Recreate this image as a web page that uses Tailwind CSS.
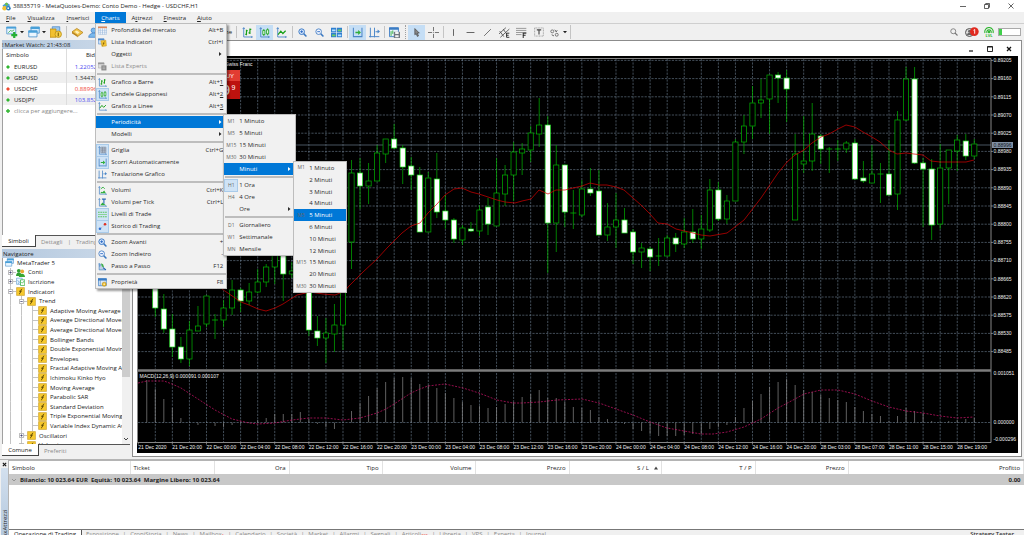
<!DOCTYPE html>
<html lang="it">
<head>
<meta charset="utf-8">
<title>38835719 - MetaQuotes-Demo: Conto Demo - Hedge - USDCHF,H1</title>
<script src="https://cdn.jsdelivr.net/npm/@tailwindcss/browser@4"></script>
</head>
<body class="h-screen overflow-hidden flex flex-col bg-[#f0f0f0] font-['Open_Sans','Noto_Sans',sans-serif] text-[6px] leading-none text-[#222] whitespace-nowrap">

<svg class="hidden" aria-hidden="true">
  <symbol id="axes" viewBox="0 0 16 16"><path d="M2.5 1v13.5H15M1 3l1.500-2L4 3M13.500 13l1.500 1.500-1.500 1.500" fill="none" stroke="#4a86c8" stroke-width="1.300"/></symbol>
  <symbol id="bars" viewBox="0 0 16 16"><use href="#axes"/><path d="M6.500 4v8M4.500 10.500h2M6.500 5.500h2M11.500 2v8M9.500 8.500h2M11.500 3.500h2" fill="none" stroke="#18a018" stroke-width="1.700"/></symbol>
  <symbol id="candles" viewBox="0 0 16 16"><use href="#axes"/><path d="M5.500 5h3v6h-3zM7 3v2M7 11v2M11 4h3v6h-3zM12.500 2v2M12.500 10v2" fill="#e8ffe8" stroke="#18a018" stroke-width="1.200"/></symbol>
  <symbol id="line" viewBox="0 0 16 16"><use href="#axes"/><path d="M3 11l4-5 3 3.500 4-4" fill="none" stroke="#18a018" stroke-width="1.700"/></symbol>
  <symbol id="zin" viewBox="0 0 16 16"><path d="M10 10l5 5" stroke="#3a78c0" stroke-width="2.600"/><circle cx="6.500" cy="6.500" r="5" fill="#dcecff" stroke="#2f6fc0" stroke-width="1.600"/><path d="M4 6.500h5M6.500 4v5" stroke="#2060c0" stroke-width="1.500"/></symbol>
  <symbol id="zout" viewBox="0 0 16 16"><path d="M10 10l5 5" stroke="#3a78c0" stroke-width="2.600"/><circle cx="6.500" cy="6.500" r="5" fill="#f0f6ff" stroke="#4a80c4" stroke-width="1.600"/><path d="M4 6.500h5" stroke="#2060c0" stroke-width="1.500"/></symbol>
  <symbol id="tile" viewBox="0 0 16 16"><path d="M0 1h7.500v6.500H0zM8.500 1H16v6.500H8.500zM0 8.500h7.500V15H0zM8.500 8.500H16V15H8.500z" fill="#2f7fd0"/><path d="M1.500 3.500h5v2.500h-5zM10 11h5v2.500h-5z" fill="#b8e0ff"/><path d="M10 3.500h5v2.500h-5zM1.500 11h5v2.500h-5z" fill="#6fd060"/></symbol>
  <symbol id="scroll" viewBox="0 0 16 16"><path d="M2 1v14M14.500 1v14M2 14h12" stroke="#4a86c8" stroke-width="1.500" fill="none"/><path d="M5 7h4V4.500L13 8l-4 3.500V9H5z" fill="#2fae3a"/></symbol>
  <symbol id="shift" viewBox="0 0 16 16"><path d="M2 1v14M8 1v14M0 14h15" stroke="#4a86c8" stroke-width="1.400" fill="none"/><path d="M9.500 6h3V3.500L16 6.500l-3.500 3V7.500h-3z" fill="#4a86c8"/></symbol>
  <symbol id="tmpl" viewBox="0 0 16 16"><path d="M.700 1h13v13H.700z" fill="#e8f2fc" stroke="#3a7cc4" stroke-width="1.300"/><path d="M0 1h14v3H0z" fill="#3a7cc4"/><path d="M3 6v7M5.500 5v5" stroke="#2fae3a" stroke-width="1.300"/><path d="M7 7h9v9H7z" fill="#707880"/><path d="M9 7h5v3H9zM9 12h5v3H9z" fill="#f2f2f2"/></symbol>
  <symbol id="grid" viewBox="0 0 16 16"><use href="#axes"/><path d="M5 2h9v10H5zM5 5.300h9M5 8.600h9M8 2v10M11 2v10" stroke="#707c90" stroke-width="1" fill="#c8d0dc"/></symbol>
  <symbol id="vol" viewBox="0 0 16 16"><use href="#axes"/><path d="M4 13l2-3 2 1 3-3 3 5z" fill="#2fae3a"/><path d="M5 5l4-3 3 3" stroke="#2fae3a" stroke-width="1.600" fill="none"/></symbol>
  <symbol id="volt" viewBox="0 0 16 16"><use href="#axes"/><path d="M4 13l4-5 6 5z" fill="#2fae3a"/><path d="M7 2h7M10.500 2v8" stroke="#2a6ab8" stroke-width="2"/></symbol>
  <symbol id="levels" viewBox="0 0 16 16"><path d="M0 4h16M0 12h16" stroke="#3fc03f" stroke-width="1.500" stroke-dasharray="3 1.200"/><path d="M0 8h16" stroke="#68cc68" stroke-width="1.200"/></symbol>
  <symbol id="hist" viewBox="0 0 16 16"><path d="M3 13L13 4" stroke="#88a" stroke-dasharray="2 1.500"/><circle cx="3.500" cy="12" r="2.300" fill="#2f6fd0"/><circle cx="12.500" cy="4" r="2.300" fill="#e03020"/></symbol>
  <symbol id="step" viewBox="0 0 16 16"><path d="M2 2v12h12M2 3l4 2-3 3z" stroke="#4a86c8" fill="#4a86c8" fill-opacity=".3" stroke-width="1.200"/><path d="M5 2l4 2 2 6-4-2z" fill="#3fae4a"/><path d="M9 10l5 4" stroke="#2060b0" stroke-width="2"/></symbol>
  <symbol id="props" viewBox="0 0 16 16"><path d="M.700 1.700h14v12h-14z" fill="#dceafa" stroke="#3a7cc4" stroke-width="1.300"/><path d="M0 1h15v3H0zM4 4v9" stroke="#3a7cc4" fill="#3a7cc4"/><circle cx="11" cy="11" r="3.600" fill="#f0c030" stroke="#b88a10"/><circle cx="11" cy="11" r="1.200" fill="#fff"/></symbol>
  <symbol id="depth" viewBox="0 0 16 16"><path d="M.600 1.600h15v13h-15z" fill="#fff" stroke="#8fb0d8"/><path d="M0 1h16v3H0z" fill="#e08858"/><path d="M0 7.500h16M0 11h16M4 4v11M8 4v11M12 4v11" stroke="#8fb0d8"/></symbol>
  <symbol id="ind" viewBox="0 0 16 16"><path d="M.700 1.700h10v9h-10z" fill="#cfe2f8" stroke="#4a86c8"/><path d="M0 1h11v3H0z" fill="#4a86c8"/><path d="M5 5l9-1 1 10-8 1z" fill="#f4c534" stroke="#c09018" stroke-width=".800"/><path d="M11.500 6.500c-2 0-1.500 7-3.500 7M8.500 9.500h3" stroke="#604400" fill="none"/></symbol>
  <symbol id="exp" viewBox="0 0 16 16"><path d="M.700 1.700h10v9h-10z" fill="#ddd" stroke="#aaa"/><path d="M0 1h11v3H0z" fill="#999"/><path d="M6 6h9v9H6z" fill="#888"/><path d="M8 9h5M8 12h5" stroke="#ddd"/></symbol>
  <symbol id="fx" viewBox="0 0 16 16"><path d="M1 1h14v14H1z" fill="#f6c92e" stroke="#c4951a"/><path d="M11 3.500c-3.500-.500-2 9-5.500 9M5.500 7.500h4.500" stroke="#4a3800" stroke-width="1.500" fill="none"/></symbol>
  <symbol id="newchart" viewBox="0 0 16 16"><path d="M1 1.500h12v9H1z" fill="#e6f3ff" stroke="#4a90c8"/><path d="M.500 1h13v2.500H.500z" fill="#48a0d8"/><path d="M3 9l3-3 2 1 3-2" stroke="#2fae3a" fill="none"/><path d="M9.500 8h3v2.500H15v3h-2.500V16h-3v-2.500H7v-3h2.500z" fill="#25b035"/></symbol>
  <symbol id="wins" viewBox="0 0 16 16"><path d="M4 1.500h11v8H4z" fill="#d4eafc" stroke="#3a88c8"/><path d="M3.500 1h12v3h-12z" fill="#48a0d8"/><path d="M1 6.500h11v8H1z" fill="#eaf6ff" stroke="#3a88c8"/><path d="M.500 6h12v3H.500z" fill="#48a0d8"/></symbol>
  <symbol id="market" viewBox="0 0 16 16"><path d="M3 1h10v11H3z" fill="#9cc8ee" stroke="#4a86c8"/><path d="M0 4h8v11H0z" fill="#f2c030" stroke="#b88a10"/><circle cx="11" cy="11" r="4.300" fill="#f6cf48" stroke="#b88a10"/><path d="M11 8.500v5" stroke="#806000" stroke-width="1.500"/></symbol>
  <symbol id="diamond" viewBox="0 0 16 16"><path d="M0 7l7-5 9 6-8 6z" fill="#efc24a" stroke="#b07c10"/><path d="M0 7l8 4.500v2.500L0 9.500z" fill="#b88420"/><path d="M4 7l3-2 4 3-3 2z" fill="#fff0b8"/></symbol>
  <symbol id="user" viewBox="0 0 16 16"><circle cx="8" cy="5" r="3.500" fill="#7ab8ec" stroke="#3a7cc4"/><path d="M1 15c0-8 14-8 14 0z" fill="#7ab8ec" stroke="#3a7cc4"/></symbol>
  <symbol id="people" viewBox="0 0 16 16"><circle cx="5" cy="5" r="3.400" fill="#2f9e30"/><path d="M0 14c0-8 10-8 10 0z" fill="#2f9e30"/><circle cx="11" cy="6" r="3.400" fill="#e8a830"/><path d="M5 16c0-8 11-8 11 0z" fill="#38a830"/></symbol>
  <symbol id="signal" viewBox="0 0 16 16"><path d="M1 2h10v11H1z" fill="#e8f4ff" stroke="#4a90c8"/><path d="M3 6l3 3-2 3" fill="none" stroke="#4a90c8" stroke-width="1.300"/><path d="M8 5h7.500v10H8z" fill="#fff" stroke="#2fae3a" stroke-width="1.300"/><path d="M9.500 9l2 2 3-4" stroke="#2fae3a" stroke-width="1.300" fill="none"/></symbol>
  <symbol id="logo" viewBox="0 0 16 16"><path d="M8 1l6 4-2 8H4L1 6z" fill="#4aa0d8"/><circle cx="4.500" cy="11" r="4" fill="#f4c030"/><circle cx="11.500" cy="11" r="4" fill="#2f80c0"/><circle cx="8" cy="4" r="2.500" fill="#6fc04a"/><circle cx="11" cy="11" r="1.500" fill="#fff"/></symbol>
</svg>

<header class="flex h-[12px] shrink-0 items-center bg-white">
  <svg class="ml-[2px] size-[9px]"><use href="#logo"/></svg>
  <h1 class="ml-[2px] flex-1">38835719 - MetaQuotes-Demo: Conto Demo - Hedge - USDCHF,H1</h1>
  <div class="flex pr-px">
    <button aria-label="Riduci" class="flex h-[10px] w-[24px] items-center justify-center"><svg class="size-[6px]" viewBox="0 0 6 6"><path d="M0 3.500h6" stroke="#222" stroke-width=".700"/></svg></button>
    <button aria-label="Ripristina" class="flex h-[10px] w-[24px] items-center justify-center"><svg class="size-[6px]" viewBox="0 0 6 6"><path d="M.500 1.500h4v4h-4zM1.700 1.500v-1h3.800v3.800h-1" fill="none" stroke="#222" stroke-width=".700"/></svg></button>
    <button aria-label="Chiudi" class="flex h-[10px] w-[24px] items-center justify-center"><svg class="size-[6px]" viewBox="0 0 6 6"><path d="M.500.500l5 5M5.500.500l-5 5" stroke="#222" stroke-width=".700"/></svg></button>
  </div>
</header>

<nav class="relative z-10 flex h-[12px] shrink-0 border-b border-[#cfcfcf]">
  <button class="px-[6px]"><u>F</u>ile</button>
  <button class="px-[6px]"><u>V</u>isualizza</button>
  <button class="px-[6px]"><u>I</u>nserisci</button>
  <div class="relative flex">
    <button class="bg-[#0078d7] px-[6px] text-white"><u>C</u>harts</button>
    <div id="menu-charts" class="absolute left-0 top-[11px] w-[132px] border border-[#bdbdbd] bg-[#f1f1f1] text-[#2a2a2a] shadow-[2px_2px_2px_rgba(0,0,0,0.4)]"></div>
    <div id="menu-period" class="absolute left-[128px] top-[102px] w-[73px] border border-[#bdbdbd] bg-[#f1f1f1] text-[#2a2a2a] shadow-[1px_1px_2px_rgba(0,0,0,0.4)]"></div>
    <div id="menu-minutes" class="absolute left-[198px] top-[149px] grid h-[132px] w-[54px] auto-rows-fr border border-[#bdbdbd] bg-[#f1f1f1] text-[#2a2a2a]"></div>
  </div>
  <button class="px-[6px]">A<u>t</u>trezzi</button>
  <button class="px-[5px]"><u>F</u>inestra</button>
  <button class="px-[6px]"><u>A</u>iuto</button>
</nav>

<div role="toolbar" class="flex h-[16px] shrink-0 items-center pl-[4px] pr-[3px]">
  <button aria-label="Nuovo grafico" class="flex w-[22px] items-center justify-center gap-[2px]"><svg class="size-[12px]"><use href="#newchart"/></svg><svg class="size-[4px]" viewBox="0 0 4 4"><path d="M0 1h4L2 3.200z" fill="#222"/></svg></button>
  <button aria-label="Profili" class="flex w-[22px] items-center justify-center gap-[2px]"><svg class="size-[12px]"><use href="#wins"/></svg><svg class="size-[4px]" viewBox="0 0 4 4"><path d="M0 1h4L2 3.200z" fill="#222"/></svg></button>
  <button aria-label="Market Watch" class="flex w-[16px] justify-center"><svg class="size-[12px]"><use href="#market"/></svg></button>
  <i class="mx-[2px] h-[12px] w-px bg-[#c4c4c4]"></i>
  <button aria-label="Navigatore" class="flex w-[16px] justify-center"><svg class="size-[11px]"><use href="#diamond"/></svg></button>
  <button aria-label="Conto" class="flex w-[16px] justify-center"><svg class="size-[11px]"><use href="#user"/></svg></button>
  <button class="w-[133px] pr-[2px] text-right">Nuovo Ordine</button>
  <i class="mx-[2px] h-[12px] w-px bg-[#c4c4c4]"></i>
  <button aria-label="Barre" class="flex h-[15px] w-[17px] items-center justify-center"><svg class="size-[11px]"><use href="#bars"/></svg></button>
  <button aria-label="Candele" class="flex h-[15px] w-[17px] items-center justify-center bg-[#c5def5]"><svg class="size-[11px]"><use href="#candles"/></svg></button>
  <button aria-label="Linee" class="flex h-[15px] w-[17px] items-center justify-center"><svg class="size-[11px]"><use href="#line"/></svg></button>
  <i class="ml-[2px] mr-px h-[12px] w-px bg-[#c4c4c4]"></i>
  <button aria-label="Zoom avanti" class="flex w-[17px] justify-center"><svg class="size-[9px]"><use href="#zin"/></svg></button>
  <button aria-label="Zoom indietro" class="flex w-[17px] justify-center"><svg class="size-[9px]"><use href="#zout"/></svg></button>
  <button aria-label="Affianca" class="flex w-[17px] justify-center"><svg class="size-[11px]"><use href="#tile"/></svg></button>
  <i class="ml-[2px] mr-px h-[12px] w-px bg-[#c4c4c4]"></i>
  <button aria-label="Scorri" class="flex h-[15px] w-[17px] items-center justify-center bg-[#c5def5]"><svg class="size-[11px]"><use href="#scroll"/></svg></button>
  <button aria-label="Traslazione" class="flex w-[17px] justify-center"><svg class="size-[11px]"><use href="#shift"/></svg></button>
  <i class="mx-px h-[12px] w-px bg-[#c4c4c4]"></i>
  <button aria-label="Modelli" class="flex w-[17px] justify-center"><svg class="size-[11px]"><use href="#tmpl"/></svg></button>
  <i class="mx-[2px] h-[14px] w-px border-l border-dotted border-[#a0a0a0]"></i>
  <button aria-label="Cursore" class="flex h-[15px] w-[17px] items-center justify-center bg-[#c5def5]"><svg class="size-[9px]" viewBox="0 0 16 16"><path d="M5 1l8 8H9.500l2 5-2 1-2-5L5 12z" fill="#888" stroke="#444" stroke-width="1.200"/></svg></button>
  <button aria-label="Mirino" class="flex w-[17px] justify-center"><svg class="size-[11px]" viewBox="0 0 16 16"><path d="M8 0v6M8 10v6M0 8h6M10 8h6M7.500 8h1" stroke="#666" stroke-width="1.300"/></svg></button>
  <i class="mx-px h-[12px] w-px bg-[#c4c4c4]"></i>
  <button aria-label="Linea verticale" class="flex w-[17px] justify-center"><svg class="size-[9px]" viewBox="0 0 16 16"><path d="M8 2v12" stroke="#666" stroke-width="1.800"/></svg></button>
  <button aria-label="Linea orizzontale" class="flex w-[17px] justify-center"><svg class="size-[9px]" viewBox="0 0 16 16"><path d="M1 8h14" stroke="#666" stroke-width="1.800"/></svg></button>
  <button aria-label="Trendline" class="flex w-[17px] justify-center"><svg class="size-[9px]" viewBox="0 0 16 16"><path d="M2 14L14 2" stroke="#666" stroke-width="1.600"/></svg></button>
  <button aria-label="Canale" class="flex w-[17px] justify-center"><svg class="size-[11px]" viewBox="0 0 16 16"><path d="M0 10L10 1M2 15L15 3M1 6l6 8M6 3l5 7" stroke="#555" stroke-width="1.300"/><path d="M11 9h4M11 12h3M11 15h4M11 9v6" stroke="#222" stroke-width="1.300"/></svg></button>
  <button aria-label="Fibonacci" class="flex w-[17px] justify-center"><svg class="size-[11px]" viewBox="0 0 16 16"><path d="M0 2h15M0 5h15M0 8h15M0 11h8" stroke="#888" stroke-width="1.200"/><path d="M10 9h5M10 12h4M10.500 9v7" stroke="#222" stroke-width="1.400"/></svg></button>
  <button aria-label="Testo" class="flex w-[17px] justify-center"><svg class="size-[10px]" viewBox="0 0 16 16"><path d="M1 1.500h14v13H1z" fill="none" stroke="#777" stroke-dasharray="1.500 1"/><path d="M4.500 4.500h7M8 4.500V12" stroke="#444" stroke-width="1.800"/></svg></button>
  <button aria-label="Oggetti" class="flex w-[23px] items-center justify-center gap-[4px]"><svg class="size-[9px]" viewBox="0 0 16 16"><circle cx="4" cy="6" r="2.600" fill="none" stroke="#666" stroke-width="1.500"/><circle cx="12" cy="12" r="2.600" fill="none" stroke="#666" stroke-width="1.500"/><path d="M8 3l4 4M13 4l-3 3M3 12l4 2" stroke="#555" stroke-width="1.600"/></svg><svg class="size-[4px]" viewBox="0 0 4 4"><path d="M0 1h4L2 3.200z" fill="#222"/></svg></button>
  <i class="h-[14px] w-px bg-[#c4c4c4]"></i>
  <div class="ml-auto flex items-center">
    <button aria-label="Cerca" class="flex w-[17px] justify-center"><svg class="size-[8px]" viewBox="0 0 16 16"><circle cx="6.500" cy="6.500" r="5" fill="none" stroke="#777" stroke-width="1.700"/><path d="M10 10l5 5" stroke="#777" stroke-width="2.200"/></svg></button>
    <button aria-label="Notifiche" class="flex w-[19px] justify-center"><svg class="h-[10px] w-[14px]" viewBox="0 0 14 10"><circle cx="4.500" cy="5.500" r="4" fill="#ddd" stroke="#555"/><circle cx="4.500" cy="4.300" r="1.500" fill="#666"/><path d="M2 8c0-3 5-3 5 0z" fill="#666"/><circle cx="9.300" cy="4.600" r="4.400" fill="#e02a20"/><path d="M8.500 3.300l1.200-.800v4.200" fill="none" stroke="#fff" stroke-width=".900"/></svg></button>
    <button aria-label="Livello" class="flex w-[16px] flex-col items-center text-[4px] font-bold leading-[3px] text-[#2fb52f]"><svg class="h-[7px] w-[10px]" viewBox="0 0 10 7"><path d="M1 6a4.200 4.200 0 1 1 8 0M3 6a2.200 2.200 0 1 1 4 0" fill="none" stroke="#2fb52f" stroke-width="1.100"/><circle cx="5" cy="5" r="1.200" fill="#2fb52f"/></svg>LVL</button>
    <div class="ml-[1px] h-[8px] w-[23px] border border-[#aaa] bg-white"><div class="h-full w-[3px] bg-[#3fd04a]"></div></div>
  </div>
</div>

<main class="flex min-h-0 flex-1 pb-[2px]">
  <aside class="flex w-[132px] shrink-0 flex-col pb-px pl-[2px] pr-[2px]">
    <h2 class="flex h-[9px] shrink-0 items-center bg-linear-to-r from-[#b4c8de] to-[#cddbea]"><span class="mr-px">⁞</span>Market Watch: 21:43:08</h2>
    <div class="min-h-0 flex-1 border-l border-[#a0a0a0] bg-white">
      <table class="w-[94px] table-fixed border-collapse">
        <thead><tr class="h-[12px]"><th class="w-[63px] border-r border-[#ddd] pl-[3px] text-left font-normal">Simbolo</th><th class="pr-[2px] text-right font-normal">Bid</th></tr></thead>
        <tbody id="quotes"></tbody>
      </table>
    </div>
    <div class="flex h-[12px] shrink-0 items-center border-t border-[#555] text-[#8a8a8a]">
      <button class="-mt-px flex h-[12px] w-[34px] items-center justify-center border-b border-r border-[#444] bg-white text-[#222]">Simboli</button>
      <button class="px-[5px]">Dettagli</button><i class="not-italic">|</i><button class="px-[5px]">Trading</button>
    </div>
    <h2 class="mt-[2px] flex h-[9px] shrink-0 items-center bg-linear-to-r from-[#b4c8de] to-[#cddbea] pl-px">Navigatore</h2>
    <div class="flex min-h-0 flex-1 overflow-hidden border-l border-[#a0a0a0] bg-white">
      <div id="tree" class="grid h-[192px] min-w-0 flex-1 auto-rows-fr overflow-hidden"></div>
      <div class="flex w-[8px] shrink-0 flex-col items-center bg-[#f0f0f0]">
        <div class="h-[119px] w-full bg-[#cdcdcd]"></div>
        <svg class="mt-auto mb-[2px] size-[6px]" viewBox="0 0 6 6"><path d="M1 2l2 2 2-2" fill="none" stroke="#444"/></svg>
      </div>
    </div>
    <div class="flex h-[12px] shrink-0 items-center border-t border-[#555] text-[#8a8a8a]">
      <button class="-mt-px flex h-[12px] w-[37px] items-center justify-center border-b border-r border-[#444] bg-white text-[#222]">Comune</button>
      <button class="px-[5px]">Preferiti</button>
    </div>
  </aside>

  <section class="mr-[2px] flex min-w-0 flex-1 flex-col border border-[#8c8c8c] bg-white pb-[3px] pl-[4px] pr-[3px]">
    <div class="flex h-[15px] shrink-0 items-center justify-end">
      <button aria-label="Riduci grafico" class="flex w-[19px] justify-center"><svg class="size-[6px]" viewBox="0 0 6 6"><path d="M1 5h4" stroke="#111" stroke-width="1.200"/></svg></button>
      <button aria-label="Ingrandisci grafico" class="flex w-[19px] justify-center"><svg class="size-[6px]" viewBox="0 0 6 6"><path d="M.500.500h5v5h-5zM.500 1h5" fill="none" stroke="#111" stroke-width=".900"/></svg></button>
      <button aria-label="Chiudi grafico" class="flex w-[19px] justify-center"><svg class="size-[6px]" viewBox="0 0 6 6"><path d="M1 1l4 4M5 1L1 5" stroke="#111" stroke-width="1.300"/></svg></button>
    </div>
    <div class="min-h-0 flex-1 bg-black">
      <svg id="chart" class="block h-full w-full font-['Liberation_Sans',sans-serif] text-[5px]" viewBox="137 56 881 397" role="img" aria-label="USDCHF H1"></svg>
    </div>
  </section>
</main>

<section class="flex h-[76px] shrink-0 border-t border-[#b4b4b4]">
  <div class="flex w-[8px] shrink-0 flex-col items-center overflow-hidden pl-[1px]">
    <button aria-label="Chiudi" class="flex h-[8px] shrink-0 items-center"><svg class="size-[5px]" viewBox="0 0 6 6"><path d="M1 1l4 4M5 1L1 5" stroke="#111" stroke-width="1.300"/></svg></button>
    <div class="flex min-h-0 w-full flex-1 rotate-180 items-center justify-start bg-linear-to-b from-[#b4c8de] to-[#d3e0ee] [writing-mode:vertical-rl]"><span class="-mt-[18px]">ToolboxAttrezzi</span></div>
  </div>
  <div class="flex min-w-0 flex-1 flex-col border-l border-t border-[#b4b4b4] bg-white">
    <table class="w-full table-fixed border-collapse">
      <thead>
        <tr class="h-[13px] *:border-r *:border-[#e2e2e2] *:font-normal *:px-[3px] *:text-right">
          <th class="w-[121px] text-left!">Simbolo</th><th class="w-[84px] text-left!">Ticket</th><th class="w-[75px]">Ora</th><th class="w-[93px]">Tipo</th><th class="w-[93px]">Volume</th><th class="w-[94px]">Prezzo</th><th class="w-[92px]">S / L &nbsp;&nbsp;<svg class="inline size-[4px]" viewBox="0 0 4 4"><path d="M0 3.500h4L2 .500z" fill="#444"/></svg></th><th class="w-[94px]">T / P</th><th class="w-[93px]">Prezzo</th><th>Profitto</th>
        </tr>
      </thead>
      <tbody><tr class="h-[11px] bg-[#c8c8c8] font-bold"><td colspan="9" class="pl-[3px]"><svg class="mr-[4px] inline size-[4px]" viewBox="0 0 4 4"><path d="M0 1l2 2 2-2" fill="none" stroke="#888" stroke-width=".800"/></svg>Bilancio: 10 023.64 EUR&nbsp; Equità: 10 023.64&nbsp; Margine Libero: 10 023.64</td><td class="pr-[3px] text-right">0.00</td></tr></tbody>
    </table>
    <div class="mt-auto flex h-[6px] items-start overflow-hidden border-t border-[#777] bg-[#f0f0f0] text-[#8a8a8a]">
      <div id="tabs" class="-mt-px flex h-[10px] items-center"></div>
      <button class="-mt-px ml-auto h-[10px] pr-[10px] font-semibold text-[#333]">Strategy Tester</button>
    </div>
  </div>
</section>

<script>
const byId = id => document.getElementById(id);

/* ---- menus ---- */
const SEP = '<hr class="my-[2px] ml-[2px] h-0 border-0 outline-[0.5px] outline-[#bdbdbd]">';
const chartsMenu = [
  ['depth','Profondità del mercato','Alt+B'],['ind','Lista Indicatori','Ctrl+I'],['','Oggetti','>'],['exp','Lista Experts','','off'],0,
  ['bars','Grafico a Barre','Alt+<u>1</u>'],['candles','Candele Giapponesi','Alt+<u>2</u>','on'],['line','Grafico a Linee','Alt+<u>3</u>'],0,
  ['','Periodicità','>','hot'],['','Modelli','>'],0,
  ['grid','Griglia','Ctrl+G','on'],['scroll','Scorri Automaticamente','','on'],['shift','Traslazione Grafico',''],0,
  ['vol','Volumi','Ctrl+K'],['volt','Volumi per Tick','Ctrl+L'],['levels','Livelli di Trade','','on'],['hist','Storico di Trading','','on'],0,
  ['zin','Zoom Avanti','+'],['zout','Zoom Indietro','-'],['step','Passo a Passo','F12'],0,
  ['props','Proprietà','F8']];
const ARROW = '<svg class="mr-px size-[4px]" viewBox="0 0 4 4"><path d="M1 0v4l2.500-2z" fill="currentColor"/></svg>';
byId('menu-charts').innerHTML = chartsMenu.map(m => {
  if (!m) return SEP;
  const [icon, label, key, st] = m;
  const tone = st === 'hot' ? 'bg-[#0078d7] text-white' : st === 'off' ? 'text-[#8c8c8c]' : '';
  const mark = st === 'on' ? 'bg-[#cfe3f6] outline outline-[#a9cbea]' : '';
  return `<button class="flex h-[12px] w-full items-center pr-[3px] ${tone}">
    <span class="ml-px flex size-[11px] items-center justify-center ${mark}">${icon ? `<svg class="size-[9px]"><use href="#${icon}"/></svg>` : ''}</span>
    <span class="ml-[3px] flex-1 text-left">${label}</span>${key === '>' ? ARROW : `<span>${key}</span>`}</button>`;
}).join('');

const periodMenu = [['M1','1 Minuto'],['M5','5 Minuti'],['M15','15 Minuti'],['M30','30 Minuti'],['','Minuti','hot','>'],0,
  ['H1','1 Ora','on'],['H4','4 Ore'],['','Ore','','>'],0,['D1','Giornaliero'],['W1','Settimanale'],['MN','Mensile']];
const minuteMenu = [['M1','1 Minuto'],['','2 Minuti'],['','3 Minuti'],['','4 Minuti'],['M5','5 Minuti','hot'],['','6 Minuti'],
  ['','10 Minuti'],['','12 Minuti'],['M15','15 Minuti'],['','20 Minuti'],['M30','30 Minuti']];
const periodRow = m => {
  if (!m) return SEP;
  const [code, label, st, arrow] = m;
  return `<button class="flex min-h-[11px] w-full items-center pr-[3px] ${st === 'hot' ? 'bg-[#0078d7] text-white' : ''}">
    <span class="ml-px flex h-[11px] w-[12px] items-center justify-center text-[5px] text-[#666] ${st === 'on' ? 'bg-[#cfe3f6] outline outline-[#a9cbea]' : ''}">${code}</span>
    <span class="ml-[2px] flex-1 text-left">${label}</span>${arrow ? ARROW : ''}</button>`;
};
byId('menu-period').innerHTML = periodMenu.map(m => m ? `<div class="flex h-[12px]">${periodRow(m)}</div>` : SEP).join('');
byId('menu-minutes').innerHTML = minuteMenu.map(periodRow).join('');

/* ---- market watch ---- */
byId('quotes').innerHTML = [['EURUSD','1.22052','text-[#4a4af0]',1],['GBPUSD','1.34470','text-[#333]',1],['USDCHF','0.88996','text-[#f04030]',0],['USDJPY','103.852','text-[#4a4af0]',1]]
  .map(([s, b, tone, up], i) => `<tr class="h-[11px] ${i % 2 ? 'bg-[#efefef]' : ''}"><td class="border-r border-[#ddd] pl-[3px]"><svg class="mr-[4px] inline size-[4px]" viewBox="0 0 4 4"><path d="M2 0l2 2-2 2-2-2z" fill="${up ? '#2fb52f' : '#f04a30'}"/></svg>${s}</td><td class="${tone} text-right">${b}</td></tr>`).join('')
  + '<tr class="h-[11px]"><td colspan="2" class="pl-[3px] text-[#888]"><svg class="mr-[4px] inline size-[4px]" viewBox="0 0 4 4"><path d="M1.300 0h1.400v1.300H4v1.400H2.700V4H1.300V2.700H0V1.300h1.300z" fill="#2fb52f"/></svg>clicca per aggiungere...</td></tr>';

/* ---- navigator tree ---- */
const V = '<i class="w-[11px] shrink-0 self-stretch bg-[linear-gradient(#c4c4c4,#c4c4c4)] bg-[length:1px_100%] bg-center bg-no-repeat"></i>';
const T = '<i class="flex w-[11px] shrink-0 items-center self-stretch pl-[5px]"><b class="w-px self-stretch bg-[#c4c4c4]"></b><b class="h-px flex-1 bg-[#c4c4c4]"></b></i>';
const box = plus => `<i class="flex w-[11px] shrink-0 items-center justify-end self-stretch bg-[linear-gradient(#c4c4c4,#c4c4c4)] bg-[length:1px_100%] bg-center bg-no-repeat"><svg class="h-[5px] w-[8px]" viewBox="0 0 8 5"><path d="M5 2.500h3" stroke="#c4c4c4"/><path d="M.400.400h4.200v4.200H.400z" fill="#fff" stroke="#999" stroke-width=".700"/><path d="M1.300 2.500h2.400${plus ? 'M2.500 1.300v2.400' : ''}" stroke="#336" stroke-width=".700"/></svg></i>`;
const node = (pre, icon, label) => `<div class="flex items-center">${pre}<svg class="size-[9px] shrink-0"><use href="#${icon}"/></svg><span class="ml-[3px]">${label}</span></div>`;
const P = '<i class="w-[2px] shrink-0"></i>';
byId('tree').innerHTML = [
  node(P, 'wins', 'MetaTrader 5'), node(P + box(1), 'people', 'Conti'), node(P + box(1), 'signal', 'Iscrizione'),
  node(P + box(0), 'fx', 'Indicatori'), node(P + V + box(0), 'fx', 'Trend'),
  ...['Adaptive Moving Average','Average Directional Movement Index','Average Directional Movement Index Wilder','Bollinger Bands','Double Exponential Moving Average','Envelopes','Fractal Adaptive Moving Average','Ichimoku Kinko Hyo','Moving Average','Parabolic SAR','Standard Deviation','Triple Exponential Moving Average','Variable Index Dynamic Average'].map(n => node(P + V + V + T, 'fx', n)),
  node(P + V + box(1), 'fx', 'Oscillatori'), node(P + V + box(1), 'fx', 'Volumi')].join('');

/* ---- toolbox tabs ---- */
byId('tabs').innerHTML = '<button class="h-full border-r border-[#555] bg-white px-[5px] text-[#222]">Operazione di Trading</button>'
  + ['Esposizione','CroniStoria','News','Mailbox<sub class="text-[4px] text-[#f03020]">5</sub>','Calendario','Società','Market','Allarmi','Segnali','Articoli<sub class="text-[4px] text-[#f03020]">706</sub>','Libreria','VPS','Experts','Journal']
  .map((t, i) => `${i ? '<i class="not-italic">|</i>' : ''}<button class="px-[4px]">${t}</button>`).join('');

/* ---- chart: [wick top, body top, body bottom, wick bottom, bearish] per hour ---- */
const candles = [
[283,283,308,317,1],[294,309,329,333,1],[314,329,347,357,1],[337,347,359,363,1],[321,330,359,366],[306,326,331,331],[296,296,324,327],[314,320,320,339],[300,308,320,327],[280,290,308,315],
[288,290,301,312,1],[283,292,301,305],[269,282,292,293],[264,267,282,287],[250,253,267,284],[245,250,274,301,1],[262,271,274,278],[250,255,271,280],[270,275,330,336,1],[316,331,338,346,1],
[318,333,338,363],[304,325,334,352],[240,242,325,350],[160,173,242,269],[158,173,186,209,1],[163,181,186,204],[145,153,181,181],[139,139,154,163],[124,139,148,149,1],[145,148,167,184,1],
[157,166,175,190,1],[167,175,232,232,1],[172,178,232,232],[153,179,212,218,1],[195,211,220,229,1],[218,220,239,243,1],[225,228,240,245],[222,229,231,232,1],[205,210,231,236],[198,207,224,235,1],
[158,193,226,226],[165,175,194,206],[142,152,175,201],[143,149,153,175],[126,133,150,162],[98,125,134,147],[116,125,223,273,1],[145,165,223,252],[165,165,212,227,1],[190,213,213,229],
[180,189,215,217],[168,189,193,196,1],[170,191,235,235,1],[203,227,235,241],[193,220,227,248],[208,220,233,233,1],[229,232,252,264,1],[243,248,252,268],[247,249,257,271,1],[238,256,256,266],
[235,238,256,256],[233,238,244,252,1],[218,232,244,248],[209,232,239,243,1],[215,229,239,249],[179,190,230,232],[182,190,219,221,1],[195,201,219,224],[139,142,201,201],[115,126,142,154],
[86,103,126,139],[79,100,103,118],[75,75,99,134],[72,75,78,103,1],[70,78,89,122,1],[134,154,220,220],[116,161,164,173],[103,134,161,171],[134,136,149,164,1],[147,149,149,173],
[140,149,149,161],[141,143,149,153],[139,143,179,180,1],[161,178,181,183,1],[145,174,183,183],[163,174,174,203],[140,174,195,195,1],[111,120,194,210],[67,79,120,121],[67,79,163,164,1],
[158,163,169,227,1],[159,169,225,240,1],[144,168,224,229],[150,150,168,204],[135,140,151,171],[134,141,156,160,1],[139,144,156,159]];
const macd = [380,389,399,408,418,422,425,423,426,427,425,424,422,420,418,414,414,414,412,419,424,427,429,422,411,403,396,388,382,378,377,378,384,385,388,393,398,402,405,406,408,407,404,402,397,394,390,398,398,402,407,408,410,417,419,421,424,429,431,434,436,436,436,435,434,434,429,427,425,417,408,401,394,387,382,379,385,390,392,395,398,400,402,407,411,414,416,421,416,408,411,413,421,422,421,420,419,418];
const ma = '222,289 241,302 249,305 258,309 266,311 275,308 283,304 297,295 310,292 323,294 335,295 345,291 348,287 363,272 377,259 387,248 402,233 411,226 420,223 428,213 437,204 445,195 454,189 462,188 471,192 479,194 488,197 497,200 505,202 515,203 522,201 531,199 539,190 548,194 556,190 565,190 573,188 582,186 590,183 599,185 607,185 616,187 624,190 633,198 641,205 650,214 658,223 667,224 676,229 693,233 701,235 710,236 727,233 744,220 761,198 778,173 787,162 795,155 804,150 812,143 821,137 829,134 838,129 846,125 855,127 863,132 872,137 880,142 889,150 897,154 906,153 914,154 923,155 931,161 940,162 957,162 966,162 974,160';
const signal = '138,383 147,381 164,381 172,384 181,388 198,399 215,410 232,419 249,423 258,424 275,423 292,420 309,418 326,418 343,420 360,418 377,413 386,409 394,404 411,393 420,389 428,386 445,384 463,388 479,393 497,400 513,403 522,403 539,402 557,400 582,399 599,403 616,409 633,415 650,422 667,428 684,431 701,434 713,434 727,432 744,427 761,419 778,408 795,399 804,394 821,390 838,390 855,394 872,401 889,407 906,411 923,413 940,416 957,418 974,417';
const X = k => 155.3 + 8.53125 * k, Y0 = 60.4, DY = 18.2;
let g = '';
let grid = '';
for (let i = 0; i <= 48; i++) grid += `M${X(i * 2)} 59V369M${X(i * 2)} 373V442`;
for (let i = 0; i <= 16; i++) grid += `M138 ${Y0 + DY * i}H991`;
grid += 'M138 422.5H991';
g += `<path d="${grid}" fill="none" stroke="#6f8294" stroke-width=".6" stroke-dasharray="2.2 1.2"/>`;
g += '<path d="M138 145H991" stroke="#5c6b7a" stroke-width=".8"/>';
macd.forEach((y, i) => g += `<path d="M${X(i - 1)} 422.500V${y}" stroke="#8a8a8a" stroke-width=".7"/>`);
candles.forEach(([h, t, b, l, w], k) => {
  const x = X(k);
  g += `<path d="M${x} ${h}V${t}M${x} ${b}V${l}" stroke="#00b400" stroke-width=".7"/>`;
  g += t === b ? `<path d="M${x - 3} ${t}h6" stroke="#00b400" stroke-width=".8"/>`
    : `<rect x="${x - 2.6}" y="${t}" width="5.2" height="${b - t}" fill="${w ? '#fff' : '#000'}" stroke="${w ? '#20e020' : '#00b400'}" stroke-width=".7"/>`;
});
g += `<polyline points="${ma}" fill="none" stroke="#d80000" stroke-width=".7"/>`;
g += `<polyline points="${signal}" fill="none" stroke="#d0146c" stroke-width=".7" stroke-dasharray="2 1.4"/>`;
g += '<path d="M137.500 58.500H991V442.500H137.500z" fill="none" stroke="#a8a8a8" stroke-width=".8"/><path d="M137 370.500H991" stroke="#7c7c7c" stroke-width="2.600"/>';
const txt = (x, y, s, a) => `<text x="${x}" y="${y}" fill="#f0f0f0"${a ? ` text-anchor="${a}"` : ''}>${s}</text>`;
for (let i = 0; i <= 16; i++) g += `<path d="M991 ${Y0 + DY * i}h2" stroke="#a8a8a8" stroke-width=".7"/>` + txt(993.5, Y0 + DY * i + 1.8, (0.89205 - i * 0.00045).toFixed(5));
g += '<rect x="992" y="142" width="21" height="6" fill="#7f8fa3"/><text x="993.500" y="146.800" fill="#101820">0.88996</text>';
g += txt(993.5, 375, '0.001051') + txt(993.5, 424.3, '0.000000') + txt(993.5, 441, '-0.000296');
const times = ['21 Dec 2020','21 Dec 20:00','22 Dec 00:00','22 Dec 04:00','22 Dec 08:00','22 Dec 12:00','22 Dec 16:00','22 Dec 20:00','23 Dec 00:00','23 Dec 04:00','23 Dec 08:00','23 Dec 12:00','23 Dec 16:00','23 Dec 20:00','24 Dec 00:00','24 Dec 04:00','24 Dec 08:00','24 Dec 12:00','24 Dec 16:00','24 Dec 20:00','28 Dec 03:00','28 Dec 07:00','28 Dec 11:00','28 Dec 15:00','28 Dec 19:00'];
times.forEach((t, i) => { const x = 138.2 + 34.125 * i; g += `<path d="M${x} 442.500v2" stroke="#a8a8a8" stroke-width=".7"/>` + txt(x, 449.2, t); });
g += txt(139.5, 377.5, 'MACD(12,26,9) 0.000091 0.000107') + txt(252.5, 66, 'US Dollar vs Swiss Franc', 'end');
g += '<rect x="200" y="70" width="40" height="11" fill="#e23c32"/><rect x="200" y="81" width="40" height="18" fill="#bd120e"/><text x="234" y="77.500" fill="#fff" font-size="6" text-anchor="end">BUY</text><text x="230" y="95" fill="#fff" font-size="14" text-anchor="end">99</text><text x="231.500" y="90" fill="#fff" font-size="7">9</text>';
byId('chart').innerHTML = g;
</script>
</body>
</html>
